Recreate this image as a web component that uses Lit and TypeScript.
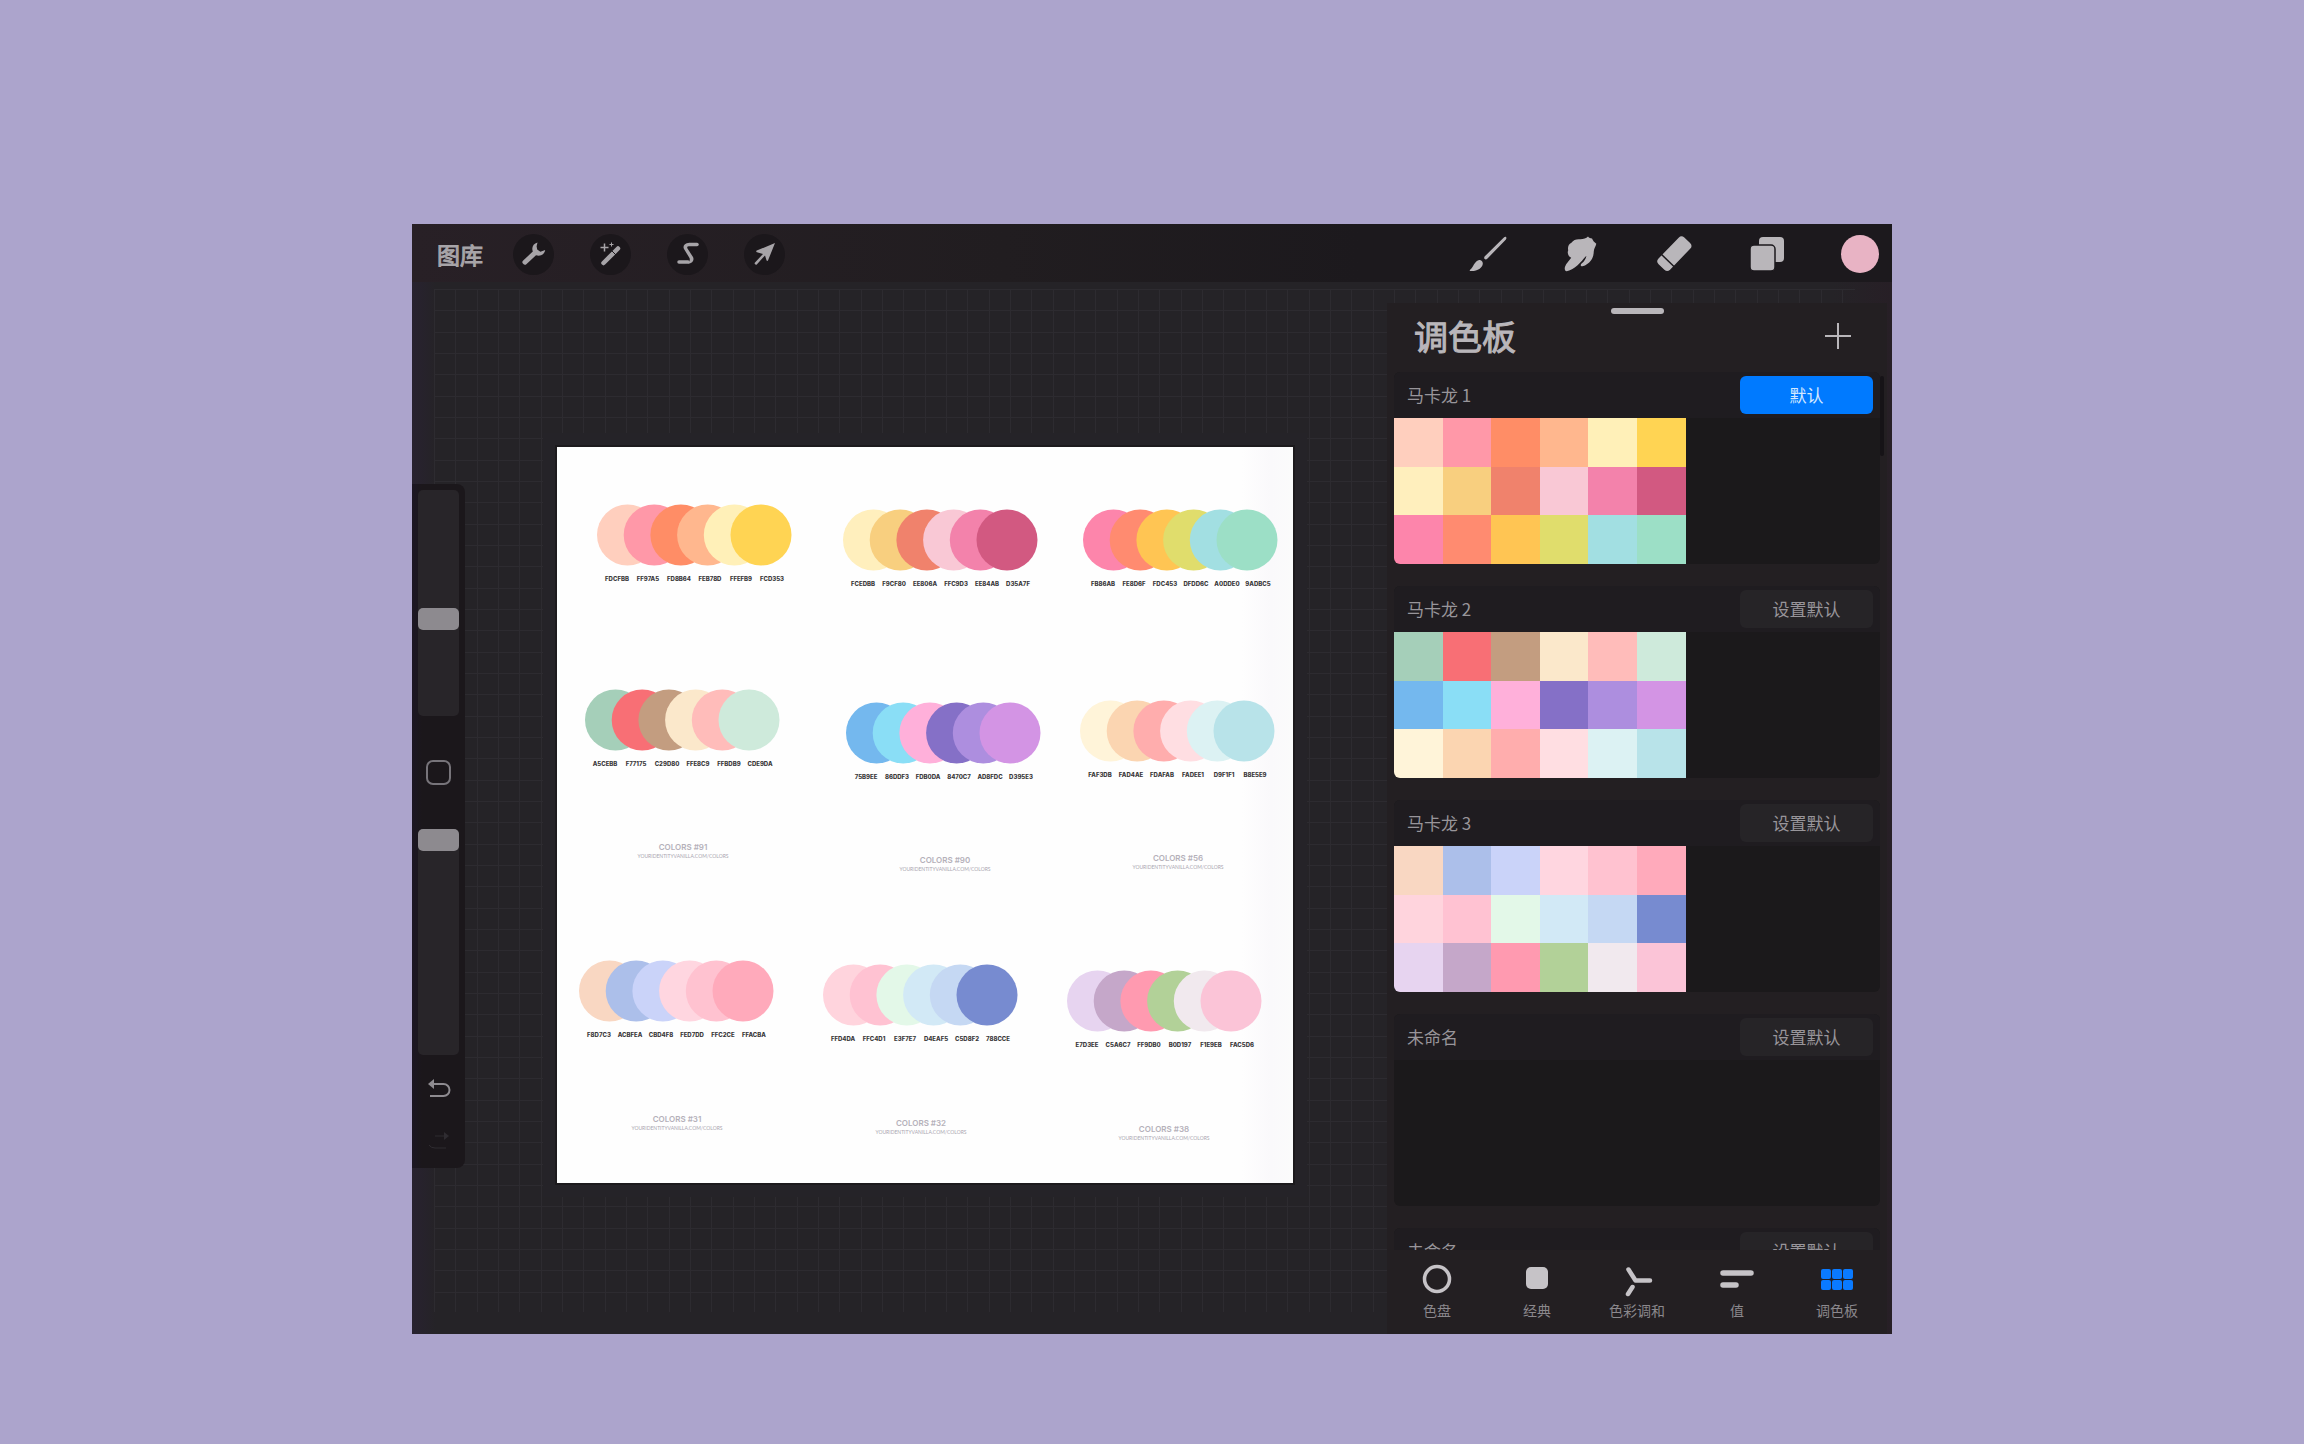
import { LitElement, html, svg, css } from "lit";
import { customElement, property } from "lit/decorators.js";

interface Palette {
  name: string;
  isDefault?: boolean;
  colors: string[];
}

interface Chart {
  x: number;
  y: number;
  colors: string[];
  codes: string[];
  caption?: { x: number; y: number; title: string };
}

const hex = (list: string) => list.split(" ").map((c) => "#" + c);

const MACARON_1 = [
  hex("ffcfbe ff98a8 ff8d66 ffb78e fff0b8 ffd453"),
  hex("ffefbd f8cf7f f0826c f9c8d5 f382ab d25981"),
  hex("fd85ab ff8b70 ffc553 e0dd6c a2dfe2 9cdfc6"),
];
const MACARON_2 = [
  hex("a5cfb9 f86f75 c39d80 fbe8cb ffbcba ceeadb"),
  hex("74b8ee 8adef6 ffb0da 8570c7 ad8edf d394e4"),
  hex("fff4d9 fbd5b1 ffadad ffdee2 dcf2f3 b8e3e9"),
];
const MACARON_3 = [
  hex("f9d7c2 acbfea cad3f9 ffd6e0 ffc2d0 ffaabb"),
  hex("ffd4dd ffc2d2 e3f8e8 d2e9f6 c5d8f3 778bd0"),
  hex("e7d4f0 c5a7c9 ff9ab0 b2d198 f1e9ee fbc4d7"),
];

const PALETTES: Palette[] = [
  { name: "马卡龙 1", isDefault: true, colors: MACARON_1.flat() },
  { name: "马卡龙 2", colors: MACARON_2.flat() },
  { name: "马卡龙 3", colors: MACARON_3.flat() },
  { name: "未命名", colors: [] },
  { name: "未命名", colors: [] },
];

const CHARTS: Chart[] = [
  { x: 40, y: 88, colors: MACARON_1[0], codes: "FDCFBB FF97A5 FD8B64 FEB78D FFEFB9 FCD353".split(" ") },
  { x: 286, y: 93, colors: MACARON_1[1], codes: "FCEDBB F9CF80 EE806A FFC9D3 EE84AB D35A7F".split(" ") },
  { x: 526, y: 93, colors: MACARON_1[2], codes: "FB86AB FE8D6F FDC453 DFDD6C A0DDE0 9ADBC5".split(" ") },
  { x: 28, y: 273, colors: MACARON_2[0], codes: "A5CEBB F77175 C29D80 FFE8C9 FFBDB9 CDE9DA".split(" "), caption: { x: 126, y: 400, title: "COLORS #91" } },
  { x: 289, y: 286, colors: MACARON_2[1], codes: "75B9EE 86DDF3 FDB0DA 8470C7 AD8FDC D395E3".split(" "), caption: { x: 388, y: 413, title: "COLORS #90" } },
  { x: 523, y: 284, colors: MACARON_2[2], codes: "FAF3DB FAD4AE FDAFAB FADEE1 D9F1F1 B8E5E9".split(" "), caption: { x: 621, y: 411, title: "COLORS #56" } },
  { x: 22, y: 544, colors: MACARON_3[0], codes: "F8D7C3 ACBFEA CBD4F8 FED7DD FFC2CE FFACBA".split(" "), caption: { x: 120, y: 672, title: "COLORS #31" } },
  { x: 266, y: 548, colors: MACARON_3[1], codes: "FFD4DA FFC4D1 E3F7E7 D4EAF5 C5D8F2 788CCE".split(" "), caption: { x: 364, y: 676, title: "COLORS #32" } },
  { x: 510, y: 554, colors: MACARON_3[2], codes: "E7D3EE C5A6C7 FF9DB0 B0D197 F1E9EB FAC5D6".split(" "), caption: { x: 607, y: 682, title: "COLORS #38" } },
];

const icon = (w: number, h: number, body: unknown) =>
  html`<svg width=${w} height=${h} viewBox="0 0 ${w} ${h}" overflow="visible" aria-hidden="true">${body}</svg>`;

const ICONS = {
  wrench: icon(24, 24, svg`<path fill="currentColor" d="M15.5 .5C11.2 1.6 9.3 5.4 10.8 9.6L1.2 18.4a2.4 2.4 0 0 0 3.4 3.5L14 13.2c4.4 1.5 8.6-.8 9.2-5.2l-4.8 1.8-3.2-2.2-.6-3.4z"/>`),
  wand: icon(24, 24, svg`<path d="M4.5 21L19 6.5" stroke="currentColor" stroke-width="4.500" stroke-linecap="round"/><path d="M12.500 8.500l5 5" stroke="#1b181c" stroke-width="1"/><path d="M5.500 1.500v8M1.500 5.500h8" stroke="currentColor" stroke-width="1.500"/><path d="M12.500 .5v4M10.500 2.500h4" stroke="currentColor" stroke-width="1"/>`),
  select: icon(24, 24, svg`<path d="M21 2.500H13" stroke="currentColor" stroke-width="3.500" stroke-linecap="round"/><path d="M3 20H12" stroke="currentColor" stroke-width="3.500" stroke-linecap="round"/><path d="M13 1C8.500 1 6.500 4 8 7L13.500 16C14.300 18 13.500 19.500 12 21.700 16.500 21.500 18.500 18 17 15L11.500 6.500C10.700 5 11.500 4.200 13 4.200z" fill="currentColor"/>`),
  arrow: icon(24, 24, svg`<path fill="currentColor" d="M22 1L15 18.500c-.5.800-1.300.500-1.500-.200L12 13.500 4 22.200a1.300 1.300 0 0 1-2-1.800L10 12 4 10.200c-1-.3-1-1.200-.2-1.600z"/>`),
  brush: icon(38, 36, svg`<path fill="currentColor" d="M37 1c.8.700.3 1.700-.3 2.700L18.500 22.500c-1 1-2 1.200-2.800.6-.800-.700-.700-1.700.1-2.800L34.600 1.700C35.500.900 36.400.500 37 1zM9.500 24.300c2-.800 4.500.8 4.300 3.400-.3 4.300-5.800 7.800-12.400 7.300-.8-.1-1-.7-.3-1.200 3.400-2.300 3.600-7.700 8.400-9.500z"/>`),
  smudge: icon(34, 36, svg`<path fill="currentColor" d="M24 .6c1.200 1.500 2.400 1.700 4 1.900 1 2.300 2.300 3.700 4.300 5.300-.6 2.700-2.300 4.700-2.500 7.400-.2 3.200-.6 6.300-2.900 9.400-2 2.700-5 5-8.400 5.700-2 .3-2.300-1.400-.9-2.700 2.500-2.100 4.400-4.600 4.800-7.800-3.300 3.500-6 7-9.100 9.700-3.100 2.800-7.600 5.200-10.600 5.800C.9 35.300.3 33 1 30.800c1.200-3.300 4-6 6.200-9-3-1.600-4.200-4.600-3-7.500-.7-3.300.3-6.200 3.200-7.600 2.100-3 5.300-3.800 8.800-3.400C19.500 2.900 22.200 2.500 24 .6z"/>`),
  eraser: icon(38, 36, svg`<g transform="rotate(-46 19 18)"><rect x="1" y="10" width="37" height="16" rx="4" fill="currentColor"/><path d="M10 9v18" stroke="#1b181c" stroke-width="1.500"/></g>`),
  layers: icon(34, 34, svg`<rect x="9" y="0" width="25" height="25" rx="4" fill="currentColor"/><rect x="0" y="8" width="25" height="26" rx="4" fill="currentColor" stroke="#1b181c" stroke-width="1.500"/>`),
  undo: icon(24, 22, svg`<path d="M6 5H16.500a5.500 5.500 0 0 1 0 12H3" transform="translate(0 1)" fill="none" stroke="currentColor" stroke-width="2"/><path d="M1 6l6-5v10z" fill="currentColor"/>`),
  redo: icon(24, 22, svg`<path d="M18 6H8M2 15Q4 18 8 18H19" fill="none" stroke="currentColor" stroke-width="1"/><path d="M22 6l-5-4v8z" fill="currentColor"/>`),
  plus: icon(28, 28, svg`<path d="M14 1v26M1 14h26" stroke="currentColor" stroke-width="2"/>`),
  disc: icon(32, 32, svg`<circle cx="16" cy="16" r="12.500" fill="none" stroke="currentColor" stroke-width="3.500"/>`),
  classic: icon(32, 32, svg`<rect x="5" y="4" width="22" height="22" rx="5" fill="currentColor"/>`),
  harmony: icon(32, 32, svg`<path d="M7.500 6.500l7 11H29M11.500 24l-4.500 7" fill="none" stroke="currentColor" stroke-width="4.500" stroke-linecap="round" stroke-linejoin="round"/>`),
  values: icon(34, 32, svg`<path d="M3 10H31M3 22H16" stroke="currentColor" stroke-width="5.500" stroke-linecap="round"/>`),
  palettes: icon(32, 32, svg`${[0, 1, 2].map((c) => [0, 1].map((r) => svg`<rect x=${c * 11} y=${6 + r * 11} width="10" height="10" rx="2" fill="currentColor"/>`))}`),
};

@customElement("top-bar")
export class TopBar extends LitElement {
  static styles = css`
    :host {
      display: flex;
      align-items: center;
      justify-content: space-between;
      height: 58px;
      padding: 2px 13px 0 25px;
      box-sizing: border-box;
      background: linear-gradient(90deg, #282026, #211d20 40%, #1c191d 64%);
      color: #a7a4a8;
    }
    .group { display: flex; align-items: center; }
    .left { gap: 36px; }
    .right { gap: 55px; color: #b9b6ba; }
    button {
      display: grid;
      place-items: center;
      padding: 0;
      border: 0;
      background: none;
      color: inherit;
      font: inherit;
    }
    .gallery { font-size: 23px; line-height: 30px; margin-right: -6px; -webkit-text-stroke: 1px; }
    .round { width: 41px; height: 41px; border-radius: 50%; background: #1b171b; }
    .tool { width: 38px; height: 38px; }
    .color { width: 38px; height: 38px; border-radius: 50%; background: #e8b3c4; }
  `;

  render() {
    return html`
      <div class="group left">
        <button class="gallery">图库</button>
        <button class="round" aria-label="操作">${ICONS.wrench}</button>
        <button class="round" aria-label="调整">${ICONS.wand}</button>
        <button class="round" aria-label="选取">${ICONS.select}</button>
        <button class="round" aria-label="变换变形">${ICONS.arrow}</button>
      </div>
      <div class="group right">
        <button class="tool" aria-label="绘图">${ICONS.brush}</button>
        <button class="tool" aria-label="涂抹">${ICONS.smudge}</button>
        <button class="tool" aria-label="擦除">${ICONS.eraser}</button>
        <button class="tool" aria-label="图层">${ICONS.layers}</button>
        <button class="color" aria-label="颜色"></button>
      </div>
    `;
  }
}

@customElement("side-bar")
export class SideBar extends LitElement {
  static styles = css`
    :host {
      display: flex;
      flex-direction: column;
      align-items: center;
      width: 53px;
      padding: 6px 0 15px;
      box-sizing: border-box;
      border-radius: 0 8px 8px 0;
      background: linear-gradient(90deg, #1c1624, #1b171b 10px);
      color: #8e8b90;
    }
    .slider {
      appearance: none;
      writing-mode: vertical-lr;
      direction: rtl;
      width: 41px;
      height: 226px;
      margin: 0;
      border-radius: 5px;
      background: #282529;
    }
    .slider::-webkit-slider-thumb {
      appearance: none;
      width: 41px;
      height: 22px;
      border-radius: 5px;
      background: #8d8a8f;
    }
    .modify {
      width: 25px;
      height: 25px;
      margin: 44px 0;
      padding: 0;
      border: 2px solid #77747a;
      border-radius: 7px;
      background: none;
    }
    .step {
      display: grid;
      place-items: center;
      width: 41px;
      height: 24px;
      padding: 0;
      border: 0;
      background: none;
      color: inherit;
    }
    .steps { display: grid; gap: 28px; margin-top: 22px; }
    .faint { color: #2f2c31; }
  `;

  render() {
    return html`
      <input class="slider" type="range" min="0" max="100" value="42" aria-label="画笔尺寸" />
      <button class="modify" aria-label="修改"></button>
      <input class="slider" type="range" min="0" max="100" value="100" aria-label="不透明度" />
      <div class="steps">
        <button class="step" aria-label="撤销">${ICONS.undo}</button>
        <button class="step faint" aria-label="重做">${ICONS.redo}</button>
      </div>
    `;
  }
}

@customElement("art-board")
export class ArtBoard extends LitElement {
  static styles = css`
    :host {
      display: block;
      background: linear-gradient(90deg, #fefefe 93%, #faf9fb 97%, #fbfbfb);
      box-shadow: 0 0 0 2px #1c1a1d, 0 0 0 14px #252328;
    }
    .art { display: block; width: 100%; }
    .code { font: 800 6px Inter, "Liberation Sans", sans-serif; fill: #3a383a; text-anchor: middle; }
    .title { font: 600 8px Inter, "Liberation Sans", sans-serif; fill: #b5b1ba; text-anchor: middle; }
    .link { font: 400 5px Lato, "Liberation Sans", sans-serif; fill: #aaa6b0; text-anchor: middle; }
  `;

  private chart(c: Chart) {
    return svg`
      ${c.colors.map((fill, i) => svg`<circle cx=${c.x + 30.5 + i * 26.7} cy=${c.y} r="30.5" fill=${fill} />`)}
      ${c.codes.map((code, i) => svg`<text class="code" x=${c.x + 20 + i * 31} y=${c.y + 46}>${code}</text>`)}
      ${c.caption
        ? svg`<text class="title" x=${c.caption.x} y=${c.caption.y + 3}>${c.caption.title}</text>
            <text class="link" x=${c.caption.x} y=${c.caption.y + 11}>YOURIDENTITYVANILLA.COM/COLORS</text>`
        : ""}
    `;
  }

  render() {
    return html`<svg class="art" viewBox="0 0 736 736">${CHARTS.map((c) => this.chart(c))}</svg>`;
  }
}

@customElement("palette-card")
export class PaletteCard extends LitElement {
  @property({ attribute: false }) palette!: Palette;

  static styles = css`
    :host {
      display: block;
      flex: none;
      border-radius: 6px;
      overflow: hidden;
      background: #1b191b;
    }
    .head {
      display: flex;
      align-items: center;
      justify-content: space-between;
      height: 46px;
      padding: 0 7px 0 13px;
      box-sizing: border-box;
      background: #1f1c20;
    }
    .name { margin: 0; font-size: 17px; font-weight: 400; line-height: 24px; color: #98959a; }
    .set {
      width: 133px;
      height: 38px;
      padding: 0 0 2px;
      border: 0;
      border-radius: 6px;
      background: #262427;
      color: #98959a;
      font: inherit;
      font-size: 17px;
    }
    .active { background: #007aff; color: #d3e8ff; }
    .swatches {
      display: grid;
      grid-template: repeat(3, 1fr) / repeat(10, 1fr);
      height: 146px;
    }
    .swatch { padding: 0; border: 0; }
    .first { grid-column-start: 1; }
  `;

  render() {
    const { name, isDefault, colors } = this.palette;
    return html`
      <div class="head">
        <h2 class="name">${name}</h2>
        <button class="set ${isDefault ? "active" : ""}">${isDefault ? "默认" : "设置默认"}</button>
      </div>
      <div class="swatches">
        ${colors.map(
          (c, i) => html`<button class="swatch ${i % 6 === 0 ? "first" : ""}" aria-label=${c} style="background:${c}"></button>`
        )}
      </div>
    `;
  }
}

@customElement("palette-panel")
export class PalettePanel extends LitElement {
  static styles = css`
    :host {
      display: flex;
      flex-direction: column;
      width: 500px;
      background: #231f22;
      color: #b9b6ba;
    }
    .handle { width: 53px; height: 6px; margin: 5px auto 0; border-radius: 3px; background: #b9b6ba; }
    .head { display: flex; align-items: center; justify-content: space-between; padding: 1px 35px 15px 27px; }
    .title { margin: 0; font-size: 34px; font-weight: 400; line-height: 42px; -webkit-text-stroke: 1px; }
    .add { display: grid; padding: 0; border: 0; background: none; color: inherit; }
    .list {
      position: relative;
      display: flex;
      flex-direction: column;
      flex: 1 1 0;
      min-height: 0;
      gap: 22px;
      padding: 0 7px 0 7px;
      overflow: hidden;
    }
    .scroll {
      position: absolute;
      top: 4px;
      right: 3px;
      width: 4px;
      height: 80px;
      border-radius: 2px;
      background: #161317;
    }
    .tabs { display: grid; grid-template-columns: repeat(5, 1fr); height: 84px; padding-top: 13px; box-sizing: border-box; }
    .tab {
      display: flex;
      flex-direction: column;
      align-items: center;
      gap: 5px;
      padding: 0;
      border: 0;
      background: none;
      color: #c6c3c7;
      font: inherit;
    }
    .current { color: #0a7aff; }
    .label { font-size: 14px; line-height: 20px; color: #8b888d; }
  `;

  render() {
    const tabs: [string, unknown][] = [
      ["色盘", ICONS.disc],
      ["经典", ICONS.classic],
      ["色彩调和", ICONS.harmony],
      ["值", ICONS.values],
      ["调色板", ICONS.palettes],
    ];
    return html`
      <div class="handle"></div>
      <header class="head">
        <h1 class="title">调色板</h1>
        <button class="add" aria-label="新建调色板">${ICONS.plus}</button>
      </header>
      <div class="list">
        ${PALETTES.map((p) => html`<palette-card .palette=${p}></palette-card>`)}
        <div class="scroll"></div>
      </div>
      <nav class="tabs">
        ${tabs.map(
          ([label, glyph], i) => html`<button class="tab ${i === 4 ? "current" : ""}">${glyph}<span class="label">${label}</span></button>`
        )}
      </nav>
    `;
  }
}

@customElement("app-root")
export class AppRoot extends LitElement {
  static styles = css`
    :host {
      display: flex;
      height: 100vh;
      padding: 224px 412px 110px;
      box-sizing: border-box;
      background: #aca4cc;
      font-family: "Noto Sans CJK SC", "Noto Sans", sans-serif;
    }
    .window {
      display: flex;
      flex-direction: column;
      flex: 1;
      min-width: 0;
      background: #252327;
    }
    .workspace {
      position: relative;
      display: flex;
      align-items: flex-start;
      flex: 1;
      min-height: 0;
      padding-right: 5px;
      background: linear-gradient(90deg, #282230, #252327 24px, #252327 96%, #271f26);
    }
    .grid {
      position: absolute;
      inset: 7px 37px 22px 22px;
      background-image:
        linear-gradient(90deg, #2d2b30 1px, transparent 1px 21px, #2d2b30 21px 22px, transparent 22px 43px, #2d2b30 43px 44px, transparent 44px),
        linear-gradient(#2d2b30 1px, transparent 1px 21px, #2d2b30 21px 22px, transparent 22px 43px, #2d2b30 43px 44px, transparent 44px);
      background-size: 64px 64px;
    }
    side-bar { position: relative; flex: none; margin-top: 202px; }
    .stage { position: relative; flex: 1; min-width: 0; padding: 165px 94px 0 92px; }
    palette-panel { position: relative; flex: none; align-self: stretch; margin-top: 21px; }
  `;

  render() {
    return html`
      <main class="window">
        <top-bar></top-bar>
        <div class="workspace">
          <div class="grid"></div>
          <side-bar></side-bar>
          <div class="stage"><art-board></art-board></div>
          <palette-panel></palette-panel>
        </div>
      </main>
    `;
  }
}
